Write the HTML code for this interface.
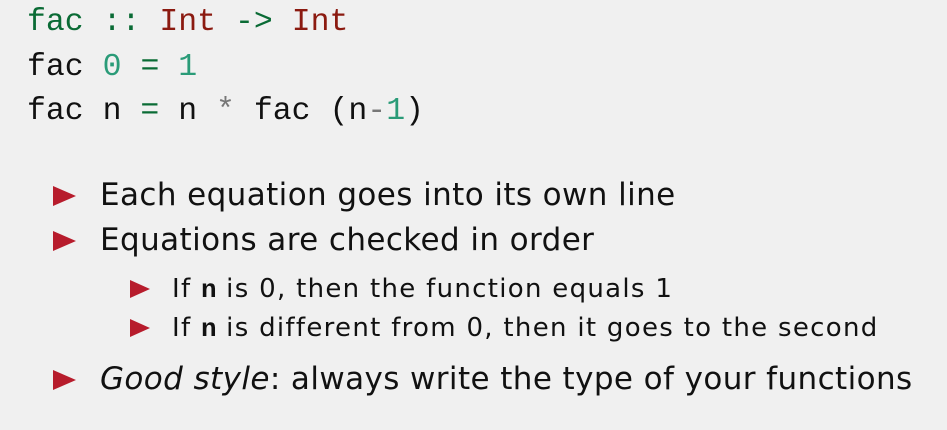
<!DOCTYPE html>
<html><head><style>
body{margin:0;width:947px;height:430px;background:#f0f0f0;position:relative;overflow:hidden;font-family:"DejaVu Sans",sans-serif;color:#111}
.c{position:absolute;left:27px;font-family:"Liberation Mono",monospace;font-size:31.5px;line-height:1;white-space:pre;color:#111}
.g{color:#0a6b35}.r{color:#8b1a10}.t{color:#2a9b78}.s{color:#777}
.b{position:absolute;white-space:pre;line-height:1}
.l1{left:100px;font-size:31px;letter-spacing:0.4px}
.l2{left:172px;font-size:26px;letter-spacing:1.3px}
.tri{position:absolute;width:0;height:0;border-style:solid;border-color:transparent transparent transparent #b71c2c}
.t1{left:53px;border-width:10px 0 10px 23px}
.t2{left:130px;border-width:9px 0 9px 20px}
.m{font-family:"Liberation Mono",monospace;font-weight:bold;letter-spacing:0}
</style></head><body>
<div class="c" style="top:7px"><span class="g">fac</span> <span class="g">::</span> <span class="r">Int</span> <span class="g">-&gt;</span> <span class="r">Int</span></div>
<div class="c" style="top:52px">fac <span class="t">0</span> <span class="g">=</span> <span class="t">1</span></div>
<div class="c" style="top:96px">fac n <span class="g">=</span> n <span class="s">*</span> fac (n<span class="s">-</span><span class="t">1</span>)</div>

<div class="tri t1" style="top:186px"></div>
<div class="b l1" style="top:180px">Each equation goes into its own line</div>
<div class="tri t1" style="top:231px"></div>
<div class="b l1" style="top:225px">Equations are checked in order</div>
<div class="tri t2" style="top:280px"></div>
<div class="b l2" style="top:276px">If <span class="m">n</span> is 0, then the function equals 1</div>
<div class="tri t2" style="top:319px"></div>
<div class="b l2" style="top:315px">If <span class="m">n</span> is different from 0, then it goes to the second</div>
<div class="tri t1" style="top:370px"></div>
<div class="b l1" style="top:364px"><i>Good style</i>: always write the type of your functions</div>
</body></html>
